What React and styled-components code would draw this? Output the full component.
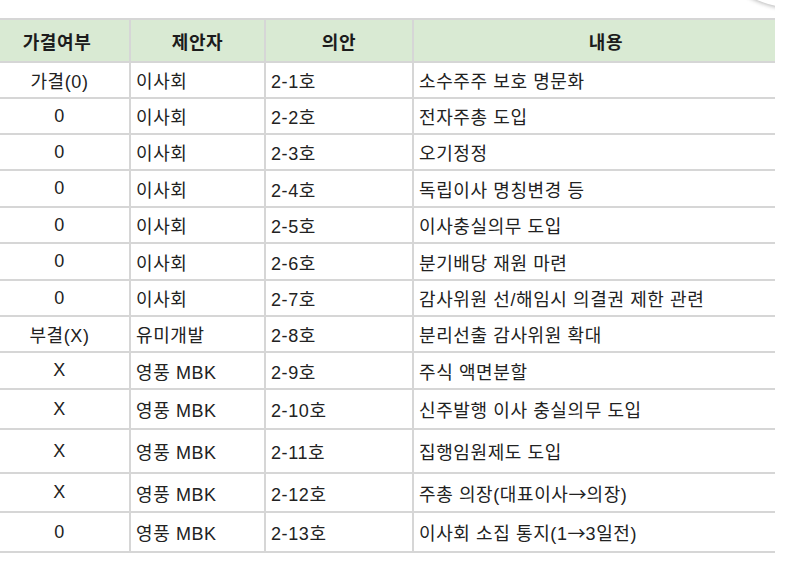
import React from "react"
import styled, { createGlobalStyle } from "styled-components"

const GlobalStyle = createGlobalStyle`
  html, body {
    margin: 0;
    padding: 0;
    background: #ffffff;
  }
  body {
    font-family: "Liberation Sans", "Noto Sans CJK KR", Arial, sans-serif;
    color: #222222;
  }
`

const Page = styled.div`
  position: relative;
  width: 775px;
  height: 574px;
  overflow: hidden;
  padding-top: 18px;
  box-sizing: border-box;
`

// the round button of the page behind, cut by the frame
const FloatingButton = styled.div`
  position: absolute;
  left: 701px;
  top: -180px;
  width: 188px;
  height: 188px;
  border-radius: 50%;
  background: #ffffff;
  box-shadow: 0 1px 4px rgba(0, 0, 0, 0.3);
`

const Table = styled.table`
  border-collapse: collapse;
  table-layout: fixed;
  margin-left: -17px;
  width: 815px;
  font-size: 18px;
  letter-spacing: 0.6px;
`

const Col = styled.col`
  width: ${props => props.w}px;
`

const HeadRow = styled.tr`
  height: 43px;
  background-color: #d9ead3;
`

const HeadCell = styled.th`
  border: 2px solid #d6d6d6;
  font-weight: bold;
  color: #1c1c1c;
  text-align: center;
  padding: 0;
`

const Row = styled.tr`
  height: ${props => props.h}px;
`

const Cell = styled.td`
  border: 2px solid #d6d6d6;
  padding: 0 0 0 5px;
  text-align: ${props => (props.center ? "center" : "left")};
  vertical-align: middle;
  white-space: nowrap;
`

const Arrow = styled.span`
  font-family: "Noto Sans CJK KR", sans-serif;
  letter-spacing: 0;
`

const withArrows = text => {
  const parts = text.split("→")
  return parts.map((p, i) => (
    <React.Fragment key={i}>
      {p}
      {i < parts.length - 1 && <Arrow>→</Arrow>}
    </React.Fragment>
  ))
}

const rows = [
  ["가결(0)", "이사회", "2-1호", "소수주주 보호 명문화", 36],
  ["0", "이사회", "2-2호", "전자주총 도입", 36],
  ["0", "이사회", "2-3호", "오기정정", 36],
  ["0", "이사회", "2-4호", "독립이사 명칭변경 등", 37],
  ["0", "이사회", "2-5호", "이사충실의무 도입", 36],
  ["0", "이사회", "2-6호", "분기배당 재원 마련", 37],
  ["0", "이사회", "2-7호", "감사위원 선/해임시 의결권 제한 관련", 36],
  ["부결(X)", "유미개발", "2-8호", "분리선출 감사위원 확대", 36],
  ["X", "영풍 MBK", "2-9호", "주식 액면분할", 37],
  ["X", "영풍 MBK", "2-10호", "신주발행 이사 충실의무 도입", 40],
  ["X", "영풍 MBK", "2-11호", "집행임원제도 도입", 44],
  ["X", "영풍 MBK", "2-12호", "주총 의장(대표이사→의장)", 39],
  ["0", "영풍 MBK", "2-13호", "이사회 소집 통지(1→3일전)", 40]
]

const App = () => {
  return (
    <React.Fragment>
      <GlobalStyle />
      <Page>
        <Table>
          <colgroup>
            <Col w={146} />
            <Col w={135} />
            <Col w={148} />
            <Col w={386} />
          </colgroup>
          <thead>
            <HeadRow>
              <HeadCell>가결여부</HeadCell>
              <HeadCell>제안자</HeadCell>
              <HeadCell>의안</HeadCell>
              <HeadCell>내용</HeadCell>
            </HeadRow>
          </thead>
          <tbody>
            {rows.map((r, key) => (
              <Row key={key} h={r[4]}>
                <Cell center>{r[0]}</Cell>
                <Cell>{r[1]}</Cell>
                <Cell>{r[2]}</Cell>
                <Cell>{withArrows(r[3])}</Cell>
              </Row>
            ))}
          </tbody>
        </Table>
        <FloatingButton />
      </Page>
    </React.Fragment>
  )
}

export default App
